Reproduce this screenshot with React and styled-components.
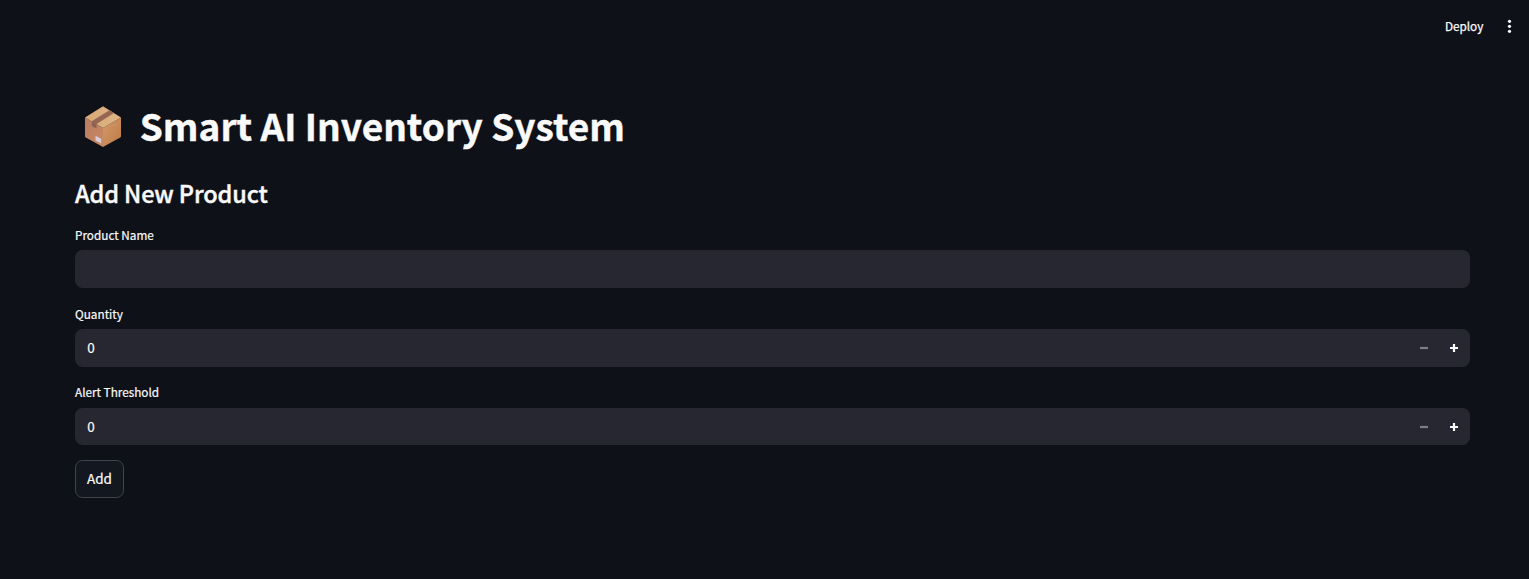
import React from "react";
import styled, { createGlobalStyle } from "styled-components";

const GlobalStyle = createGlobalStyle`
  *, *::before, *::after { box-sizing: border-box; }
  body {
    margin: 0;
    background: #0e1117;
    color: #fafafa;
    font-family: "Noto Sans CJK SC", "Noto Sans", sans-serif;
    overflow: hidden;
  }
  h1, h2 { margin: 0; }
`;

const Page = styled.div`
  min-height: 579px;
  background: #0e1117;
`;

const Toolbar = styled.header`
  height: 52px;
  display: flex;
  align-items: center;
  justify-content: flex-end;
  padding-right: 17px;
  gap: 23.7px;
`;

const DeployButton = styled.button`
  border: 0;
  padding: 0;
  background: none;
  color: #fafafa;
  font: 400 11.75px/20px "Noto Sans CJK SC", "Noto Sans", sans-serif;
  -webkit-text-stroke: 0.25px;
`;

const MenuButton = styled.button`
  display: flex;
  border: 0;
  padding: 0;
  background: none;
  color: #fafafa;
`;

const Main = styled.main`
  padding: 50px 59px 0 75px;
`;

const Title = styled.h1`
  display: flex;
  align-items: center;
  height: 50px;
  padding-left: 9px;
  gap: 17.8px;
  font-size: 37px;
  font-weight: 700;
  line-height: 50px;
  letter-spacing: -0.01px;
  white-space: nowrap;
`;

const TitleText = styled.span`
  padding-bottom: 4px;
  -webkit-text-stroke: 0.4px;
`;

const Subtitle = styled.h2`
  margin-top: 25px;
  height: 32px;
  font-size: 23.5px;
  font-weight: 500;
  line-height: 32px;
  letter-spacing: -0.12px;
  -webkit-text-stroke: 0.4px;
`;

const Form = styled.form`
  display: flex;
  flex-direction: column;
  align-items: stretch;
  gap: 14.85px;
  margin-top: 14.8px;
`;

const Field = styled.div`
  display: flex;
  flex-direction: column;
`;

const Label = styled.label`
  height: 26.35px;
  font-size: 11.75px;
  font-weight: 400;
  line-height: 22px;
  -webkit-text-stroke: 0.2px;
`;

const InputBox = styled.div`
  display: flex;
  align-items: center;
  height: 37.6px;
  border-radius: 7.5px;
  background: #262730;
  padding-left: 12.3px;
`;

const Value = styled.span`
  flex: 1;
  padding-bottom: 1px;
  font-size: 13.5px;
  line-height: 22px;
  -webkit-text-stroke: 0.2px;
`;

const Step = styled.button`
  display: flex;
  align-items: center;
  justify-content: center;
  width: 30px;
  height: 37px;
  border: 0;
  padding: 0;
  background: none;
  color: ${(p) => (p.$muted ? "#7b7f8c" : "#fafafa")};
  &:last-child { margin-right: 1.5px; }
`;

const AddButton = styled.button`
  align-self: flex-start;
  width: 49px;
  height: 38px;
  border: 1px solid #41444c;
  border-radius: 7.5px;
  padding: 0 0 2px;
  background: #131720;
  color: #fafafa;
  font: 400 13.5px/22px "Noto Sans CJK SC", "Noto Sans", sans-serif;
  -webkit-text-stroke: 0.2px;
`;

const PackageIcon = () => (
  <svg width="38" height="42" viewBox="0 0 38 42" aria-hidden="true">
    <defs>
      <linearGradient id="left" x1="0" y1="0" x2="1" y2="1">
        <stop offset="0" stopColor="#b77c60" />
        <stop offset="1" stopColor="#c98962" />
      </linearGradient>
      <linearGradient id="right" x1="0" y1="0" x2="1" y2="1">
        <stop offset="0" stopColor="#d49b6e" />
        <stop offset="1" stopColor="#bd7a43" />
      </linearGradient>
      <linearGradient id="top" x1="0" y1="0" x2="1" y2="0">
        <stop offset="0" stopColor="#d8a878" />
        <stop offset="1" stopColor="#dfb583" />
      </linearGradient>
    </defs>
    <path d="M1 11.5 19 22V41L1.8 31.5Q1 31 1 30Z" fill="url(#left)" />
    <path d="M37 11.5 19 22V41L36.2 31.5Q37 31 37 30Z" fill="url(#right)" />
    <path d="M19 .3 37 11.5 19 22 1 11.5Z" fill="url(#top)" />
    <path d="M25.5 4.3 30 7.1 12.5 17.9 7.8 15.2Z" fill="#966653" />
    <path d="M7.8 15.2 12.5 17.9V22.6L7.8 20Z" fill="#8b6053" />
    <path d="M11.5 29.7 17.2 32.8V37.6L11.5 34.5Z" fill="#dacbd9" />
  </svg>
);

const MoreIcon = () => (
  <svg width="5" height="14" viewBox="0 0 5 14" fill="currentColor">
    <circle cx="2.5" cy="2.3" r="1.6" />
    <circle cx="2.5" cy="7.3" r="1.6" />
    <circle cx="2.5" cy="12.3" r="1.6" />
  </svg>
);

const SignIcon = ({ plus }) => (
  <svg width="8" height="8" viewBox="0 0 8 8" stroke="currentColor" strokeWidth="2.2">
    <path d={plus ? "M0 4H8M4 0V8" : "M0 4H8"} />
  </svg>
);

const NumberField = ({ label }) => (
  <Field>
    <Label>{label}</Label>
    <InputBox>
      <Value>0</Value>
      <Step type="button" $muted aria-label="Decrease"><SignIcon /></Step>
      <Step type="button" aria-label="Increase"><SignIcon plus /></Step>
    </InputBox>
  </Field>
);

export default function App() {
  return (
    <Page>
      <GlobalStyle />
      <Toolbar>
        <DeployButton>Deploy</DeployButton>
        <MenuButton aria-label="Menu"><MoreIcon /></MenuButton>
      </Toolbar>
      <Main>
        <Title>
          <PackageIcon />
          <TitleText>Smart AI Inventory System</TitleText>
        </Title>
        <Subtitle>Add New Product</Subtitle>
        <Form>
          <Field>
            <Label>Product Name</Label>
            <InputBox />
          </Field>
          <NumberField label="Quantity" />
          <NumberField label="Alert Threshold" />
          <AddButton type="button">Add</AddButton>
        </Form>
      </Main>
    </Page>
  );
}
